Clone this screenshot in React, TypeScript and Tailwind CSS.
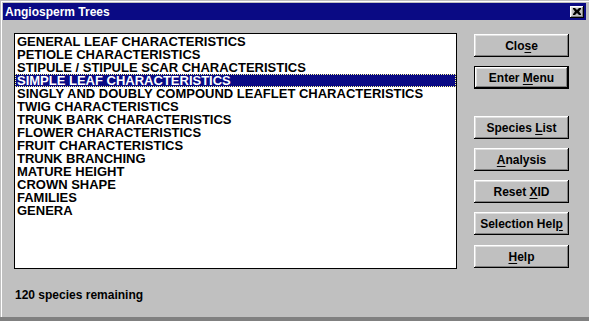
import React from 'react';

const items = [
  'GENERAL LEAF CHARACTERISTICS',
  'PETIOLE CHARACTERISTICS',
  'STIPULE / STIPULE SCAR CHARACTERISTICS',
  'SIMPLE LEAF CHARACTERISTICS',
  'SINGLY AND DOUBLY COMPOUND LEAFLET CHARACTERISTICS',
  'TWIG CHARACTERISTICS',
  'TRUNK BARK CHARACTERISTICS',
  'FLOWER CHARACTERISTICS',
  'FRUIT CHARACTERISTICS',
  'TRUNK BRANCHING',
  'MATURE HEIGHT',
  'CROWN SHAPE',
  'FAMILIES',
  'GENERA',
];

const bevel =
  'shadow-[inset_-1px_-1px_0_#000,inset_1px_1px_0_#fff,inset_-2px_-2px_0_#808080,inset_2px_2px_0_#dfdfdf]';

type BtnProps = {
  pre: string;
  key_: string;
  post: string;
  isDefault?: boolean;
  className?: string;
};

const Btn: React.FC<BtnProps> = ({ pre, key_, post, isDefault, className }) => (
  <div
    className={`w-[95px] h-[23px] bg-[#c0c0c0] ${isDefault ? 'border border-black' : ''} ${className ?? ''}`}
  >
    <div
      className={`w-full h-full flex items-center justify-center text-[12px] font-bold text-black ${bevel}`}
    >
      <span>
        {pre}
        <span className="underline underline-offset-2">{key_}</span>
        {post}
      </span>
    </div>
  </div>
);

const App: React.FC = () => {
  const selected = 3;

  return (
    <div className="w-[589px] h-[321px] bg-[#c0c0c0] flex flex-col pt-px pl-px overflow-hidden font-['Liberation_Sans',Arial,sans-serif] select-none">
      {/* Window frame */}
      <div className="flex-1 border-l border-t border-white flex flex-col">
        {/* Title bar */}
        <div className="mt-px ml-px w-[583px] h-[17px] bg-[#0a0a84] flex items-center justify-between pl-[2px] pr-[2px]">
          <span className="text-white text-[12px] font-bold leading-none">Angiosperm Trees</span>
          <div className={`w-[14px] h-[12px] bg-[#c0c0c0] flex items-center justify-center ${bevel}`}>
            <svg width="8" height="7" viewBox="0 0 8 7">
              <path d="M0 0h2l2 2 2-2h2v1L6 3.5 8 6v1H6L4 5 2 7H0V6l2-2.5L0 1z" fill="#000" />
            </svg>
          </div>
        </div>

        {/* Main row */}
        <div className="flex mt-[13px] pl-[12px]">
          {/* List box */}
          <div className="w-[443px] h-[236px] bg-white border border-black pt-px">
            {items.map((item, i) => (
              <div
                key={item}
                className={`h-[13px] leading-[13px] text-[13px] font-bold whitespace-nowrap pl-[2px] ${
                  i === selected
                    ? 'bg-[#0a0a84] text-white outline outline-1 outline-dotted outline-[#ffff99] -outline-offset-1'
                    : 'text-black'
                }`}
              >
                {item}
              </div>
            ))}
          </div>

          {/* Buttons */}
          <div className="ml-[17px] flex flex-col">
            <Btn pre="Clo" key_="s" post="e" className="mt-px" />
            <Btn pre="Enter " key_="M" post="enu" isDefault className="mt-[9px]" />
            <Btn pre="Species " key_="L" post="ist" className="mt-[27px]" />
            <Btn pre="" key_="A" post="nalysis" className="mt-[9px]" />
            <Btn pre="Reset " key_="X" post="ID" className="mt-[9px]" />
            <Btn pre="Selection Hel" key_="p" post="" className="mt-[9px]" />
            <Btn pre="" key_="H" post="elp" className="mt-[10px]" />
          </div>
        </div>

        {/* Status */}
        <div className="mt-[19px] pl-[13px] text-[12px] font-bold text-black leading-[14px]">
          120 species remaining
        </div>
      </div>

      {/* Bottom edge */}
      <div className="h-[4px] -ml-px bg-[#808080]" />
    </div>
  );
};

export default App;
